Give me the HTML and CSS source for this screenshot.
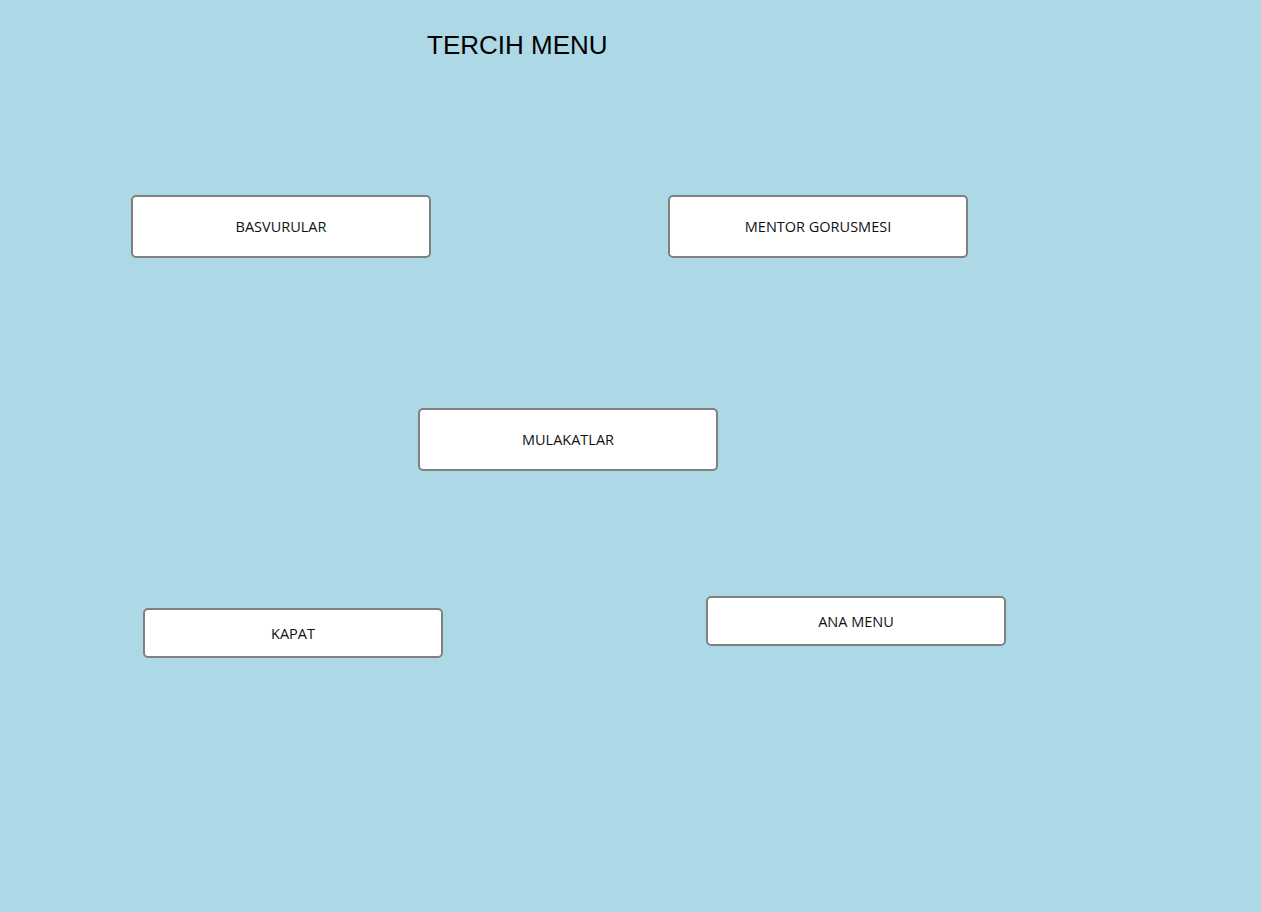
FILE: index.html
```html
<!DOCTYPE html>
<html lang="tr">
<head>
<meta charset="utf-8">
<title>Tercih Menu</title>
<link rel="stylesheet" href="styles.css">
</head>
<body>
<main class="form">
  <h1 class="title">TERCIH MENU</h1>
  <div class="row row-top">
    <button class="btn btn-tall">BASVURULAR</button>
    <button class="btn btn-tall">MENTOR GORUSMESI</button>
  </div>
  <div class="row row-mid">
    <button class="btn btn-tall">MULAKATLAR</button>
  </div>
  <div class="row row-bottom">
    <button class="btn btn-short btn-kapat">KAPAT</button>
    <button class="btn btn-short">ANA MENU</button>
  </div>
</main>
</body>
</html>
```

FILE: styles.css
```css
html, body {
  margin: 0;
  padding: 0;
  height: 100%;
}
body {
  background: #add8e6;
  font-family: "Open Sans", "Noto Sans", sans-serif;
}
.form {
  display: flex;
  flex-direction: column;
  min-height: 912px;
}
.title {
  margin: 30px 0 0 427px;
  font-family: "Liberation Sans", Arial, sans-serif;
  font-weight: normal;
  font-size: 26px;
  line-height: 30px;
  color: #000;
}
.row {
  display: flex;
  align-items: flex-start;
}
.row-top {
  margin-top: 135px;
  padding-left: 131px;
  gap: 237px;
}
.row-mid {
  margin-top: 150px;
  padding-left: 418px;
}
.row-bottom {
  margin-top: 125px;
  padding-left: 143px;
  gap: 263px;
}
.btn {
  box-sizing: border-box;
  width: 300px;
  background: #fff;
  border: 2px solid #808080;
  border-radius: 5px;
  font-family: "Open Sans", "Noto Sans", sans-serif;
  font-size: 14.5px;
  color: #111;
  padding: 0;
  display: flex;
  align-items: center;
  justify-content: center;
}
.btn-tall {
  height: 63px;
}
.btn-short {
  height: 50px;
}
.btn-kapat {
  margin-top: 12px;
}
```
